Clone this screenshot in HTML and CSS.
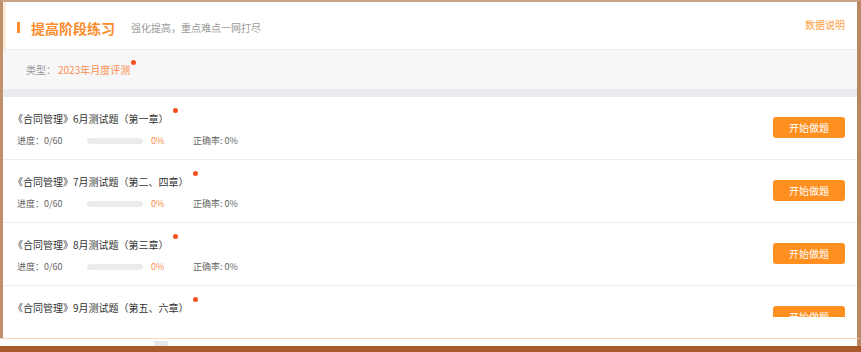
FILE: index.html
```html
<!DOCTYPE html>
<html lang="zh-CN">
<head>
    <meta charset="UTF-8">
    <title>提高阶段练习</title>
    <link rel="stylesheet" href="styles.css">
</head>
<body>
    <div class="window">
        <div class="head">
            <span class="mark"></span>
            <h1>提高阶段练习</h1>
            <span class="sub">强化提高，重点难点一网打尽</span>
            <a class="help">数据说明</a>
        </div>
        <div class="type-row">
            <span class="type-label">类型：</span>
            <span class="type-value">2023年月度评测<i class="dot"></i></span>
        </div>
        <div class="band"></div>

        <div class="list">
            <div class="item">
                <div class="info">
                    <div class="title">《合同管理》6月测试题（第一章）<i class="dot"></i></div>
                    <div class="stats">
                        <span class="count">进度：0/60</span>
                        <span class="bar"><span class="fill" style="width:0%"></span></span>
                        <span class="pct">0%</span>
                        <span class="acc">正确率: 0%</span>
                    </div>
                </div>
                <button class="start">开始做题</button>
            </div>
            <div class="item">
                <div class="info">
                    <div class="title">《合同管理》7月测试题（第二、四章）<i class="dot"></i></div>
                    <div class="stats">
                        <span class="count">进度：0/60</span>
                        <span class="bar"><span class="fill" style="width:0%"></span></span>
                        <span class="pct">0%</span>
                        <span class="acc">正确率: 0%</span>
                    </div>
                </div>
                <button class="start">开始做题</button>
            </div>
            <div class="item">
                <div class="info">
                    <div class="title">《合同管理》8月测试题（第三章）<i class="dot"></i></div>
                    <div class="stats">
                        <span class="count">进度：0/60</span>
                        <span class="bar"><span class="fill" style="width:0%"></span></span>
                        <span class="pct">0%</span>
                        <span class="acc">正确率: 0%</span>
                    </div>
                </div>
                <button class="start">开始做题</button>
            </div>
            <div class="item">
                <div class="info">
                    <div class="title">《合同管理》9月测试题（第五、六章）<i class="dot"></i></div>
                </div>
                <div class="cut"><button class="start">开始做题</button></div>
            </div>
        </div>
    </div>
    <div class="foot"><span class="thumb"></span></div>
    <div class="edge"></div>
</body>
</html>
```

FILE: styles.css
```css
* {
    box-sizing: border-box;
}
body {
    margin: 0;
    width: 861px;
    height: 352px;
    overflow: hidden;
    background: #fff;
    font-family: "Noto Sans CJK SC", "Noto Sans", sans-serif;
    color: #333;
}
.window {
    height: 338px;
    border-top: 2px solid #c9a286;
    border-left: 3px solid #c08f6c;
    border-right: 4px solid #b98763;
    overflow: hidden;
    background: #fff;
}
.head {
    display: flex;
    align-items: flex-start;
    height: 48px;
    padding: 16px 12px 0 14px;
    border-bottom: 1px solid #ececec;
    box-shadow: inset 3px 0 0 #fdecd8;
}
.mark {
    width: 3px;
    height: 11px;
    margin-top: 4px;
    background: #fa8c2b;
}
.head h1 {
    margin: 0 0 0 11px;
    font-size: 14px;
    line-height: 20px;
    font-weight: bold;
    color: #fa8c2b;
}
.sub {
    margin: 3px 0 0 16px;
    font-size: 10px;
    line-height: 14px;
    color: #999;
}
.help {
    margin-left: auto;
    font-size: 10px;
    line-height: 14px;
    color: #ff9d3f;
    cursor: pointer;
}
.type-row {
    display: flex;
    align-items: center;
    height: 39px;
    padding-left: 23px;
    background: #f7f7f7;
    font-size: 10px;
}
.type-label {
    width: 32px;
    color: #999;
}
.type-value {
    position: relative;
    color: #f98e4f;
}
.dot {
    position: absolute;
    width: 5px;
    height: 5px;
    border-radius: 50%;
    background: #f4511e;
}
.type-value .dot {
    top: -2px;
    right: -6px;
}
.band {
    height: 8px;
    background: #e9ebee;
}
.item {
    display: flex;
    align-items: flex-start;
    height: 63px;
    padding: 7px 12px 0 10px;
    border-bottom: 1px solid #ededed;
}
.info {
    flex: 1;
}
.title {
    position: relative;
    display: inline-block;
    font-size: 10px;
    line-height: 14px;
    color: #333;
}
.title .dot {
    top: -4px;
    right: -9px;
}
.stats {
    display: flex;
    align-items: center;
    margin-top: 6px;
    padding-left: 4px;
    font-size: 9px;
    line-height: 14px;
    color: #666;
}
.count {
    width: 70px;
}
.bar {
    width: 56px;
    height: 6px;
    border-radius: 3px;
    background: #ebebeb;
    overflow: hidden;
}
.fill {
    display: block;
    height: 100%;
    background: #fa8c2b;
}
.pct {
    width: 42px;
    margin-left: 8px;
    color: #f98e4f;
}
.start {
    width: 72px;
    height: 21px;
    margin-top: 13px;
    padding: 0;
    border: none;
    border-radius: 3px;
    background: #ff8f1f;
    color: #fff;
    font-family: inherit;
    font-size: 10px;
    cursor: pointer;
}
.cut {
    height: 24px;
    overflow: hidden;
}
.cut .start {
    display: block;
}
.foot {
    position: relative;
    height: 8px;
    border-top: 1px solid #fcd6b8;
    border-right: 4px solid #b98763;
    background: #fff;
}
.thumb {
    position: absolute;
    left: 154px;
    top: 2px;
    width: 14px;
    height: 5px;
    background: #e6e8ea;
}
.edge {
    height: 6px;
    background: #a85a2c;
}
```
